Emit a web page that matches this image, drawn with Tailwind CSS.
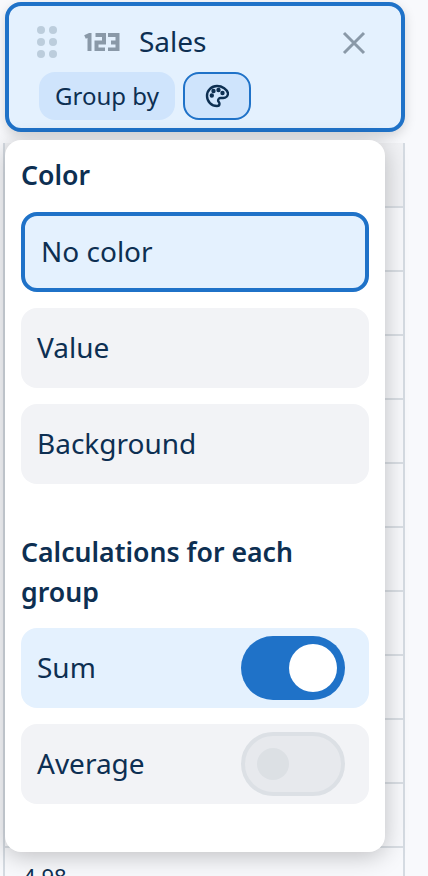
<!doctype html>
<html><head><script src="https://cdn.jsdelivr.net/npm/@tailwindcss/browser@4"></script></head>
<body class="font-['Noto_Sans',sans-serif] text-[#0d2f52] bg-[#f8f9fc]">
<div class="relative w-[428px] h-[876px] overflow-hidden">
  <!-- background table -->
  <div class="absolute left-[3px] top-[143px] w-[402px] h-[733px] border-x-2 border-[#d5dbe2] flex flex-col">
    <div class="h-[65px] shrink-0 bg-[#f1f2f5] border-b-2 border-[#d9dee4]"></div>
    <div class="h-[64px] shrink-0 border-b-2 border-[#d9dee4]"></div>
    <div class="h-[64px] shrink-0 border-b-2 border-[#d9dee4]"></div>
    <div class="h-[64px] shrink-0 border-b-2 border-[#d9dee4]"></div>
    <div class="h-[64px] shrink-0 border-b-2 border-[#d9dee4]"></div>
    <div class="h-[64px] shrink-0 border-b-2 border-[#d9dee4]"></div>
    <div class="h-[64px] shrink-0 border-b-2 border-[#d9dee4]"></div>
    <div class="h-[64px] shrink-0 border-b-2 border-[#d9dee4]"></div>
    <div class="h-[64px] shrink-0 border-b-2 border-[#d9dee4]"></div>
    <div class="h-[64px] shrink-0 border-b-2 border-[#d9dee4]"></div>
    <div class="h-[64px] shrink-0 border-b-2 border-[#d9dee4]"></div>
    <div class="pl-[18px] pt-[13px] text-[22px] leading-[30px] whitespace-nowrap">4.98</div>
  </div>

  <!-- Header chip -->
  <div class="absolute left-[5px] top-[2px] w-[400px] h-[130px] rounded-[16px] border-4 border-[#1f72c8] bg-[#e4f1fe] shadow-[0_4px_12px_rgba(0,0,0,0.15)]">
    <div class="flex items-center h-[72px] pl-[28px] pr-[35px]">
      <svg width="21" height="33" viewBox="0 0 21 33" class="shrink-0" fill="#bccddc"><circle cx="4" cy="4" r="4"/><circle cx="16" cy="4" r="4"/><circle cx="4" cy="16" r="4"/><circle cx="16" cy="16" r="4"/><circle cx="4" cy="28" r="4"/><circle cx="16" cy="28" r="4"/></svg>
      <svg width="36" height="18" viewBox="0 0 36 18" class="ml-[26px] shrink-0" fill="none" stroke="#8a99a8" stroke-width="4"><path d="M1 4L5.500 2V18"/><path d="M11.500 2H20V9.500H12.500V16.500H21"/><path d="M24 2H33.500V16.500H24M27 9.500H33.500"/></svg>
      <span class="ml-[19px] text-[28px] leading-[36px] -mt-[2px]">Sales</span>
      <svg width="24" height="24" viewBox="0 0 24 24" class="ml-auto mt-[2px] shrink-0" fill="none" stroke="#8a99a8" stroke-width="3"><path d="M2 2L22 22M22 2L2 22"/></svg>
    </div>
    <div class="flex items-center gap-[8px] pl-[30px] -mt-[6px]">
      <div class="h-[48px] w-[136px] rounded-[16px] bg-[#cfe4fc] flex items-center justify-center text-[24px]">Group by</div>
      <div class="h-[48px] w-[68px] rounded-[16px] bg-[#cfe4fc] border-2 border-[#1f72c8] flex items-center justify-center">
        <svg width="24" height="24" viewBox="0 0 24 24" fill="none" stroke="#0d2f52" stroke-width="2.400" stroke-linecap="round" stroke-linejoin="round"><path d="M12 2C6.500 2 2 6.500 2 12s4.500 10 10 10c1.500 0 2.500-1 2.500-2.300 0-.7-.3-1.200-.7-1.700-.4-.5-.7-1-.7-1.600 0-1.300 1-2.400 2.400-2.400h2.700c2.600 0 4.800-2.200 4.800-4.800C22 5.300 17.500 2 12 2z"/><circle cx="6.800" cy="11.500" r="1" fill="#0d2f52"/><circle cx="8.500" cy="7" r="1" fill="#0d2f52"/><circle cx="13.500" cy="6" r="1" fill="#0d2f52"/><circle cx="17.500" cy="9" r="1" fill="#0d2f52"/></svg>
      </div>
    </div>
  </div>

  <!-- Popover -->
  <div class="absolute left-[5px] top-[140px] w-[380px] h-[712px] rounded-[16px] bg-white shadow-[0_4px_24px_rgba(0,0,0,0.24)] px-[16px] pt-[16px]">
    <div class="text-[26.67px] leading-[40px] font-semibold -mt-[1px]">Color</div>
    <div class="mt-[17px] flex flex-col gap-[16px] text-[28px]">
      <div class="h-[80px] rounded-[16px] border-4 border-[#1f72c8] bg-[#e4f1fe] flex items-center pl-[16px] pb-[2px]">No color</div>
      <div class="h-[80px] rounded-[16px] bg-[#f2f3f6] flex items-center pl-[16px] pb-[2px]">Value</div>
      <div class="h-[80px] rounded-[16px] bg-[#f2f3f6] flex items-center pl-[16px] pb-[2px]">Background</div>
    </div>
    <div class="mt-[48px] w-[300px] text-[26.67px] leading-[40px] font-semibold">Calculations for each group</div>
    <div class="mt-[16px] flex flex-col gap-[16px] text-[28px]">
      <div class="h-[80px] rounded-[16px] bg-[#e4f1fe] flex items-center justify-between pl-[16px] pr-[24px]"><span class="-mt-[2px]">Sum</span>
        <div class="w-[104px] h-[64px] rounded-full bg-[#1f72c8] flex items-center justify-end pr-[8px]"><div class="w-[48px] h-[48px] rounded-full bg-white"></div></div>
      </div>
      <div class="h-[80px] rounded-[16px] bg-[#f2f3f6] flex items-center justify-between pl-[16px] pr-[24px]"><span class="-mt-[2px]">Average</span>
        <div class="w-[104px] h-[64px] rounded-full bg-[#e7e9ed] border-4 border-[#dce0e5] flex items-center pl-[12px]"><div class="w-[32px] h-[32px] rounded-full bg-[#dce0e4]"></div></div>
      </div>
    </div>
  </div>
</div>
</body></html>
